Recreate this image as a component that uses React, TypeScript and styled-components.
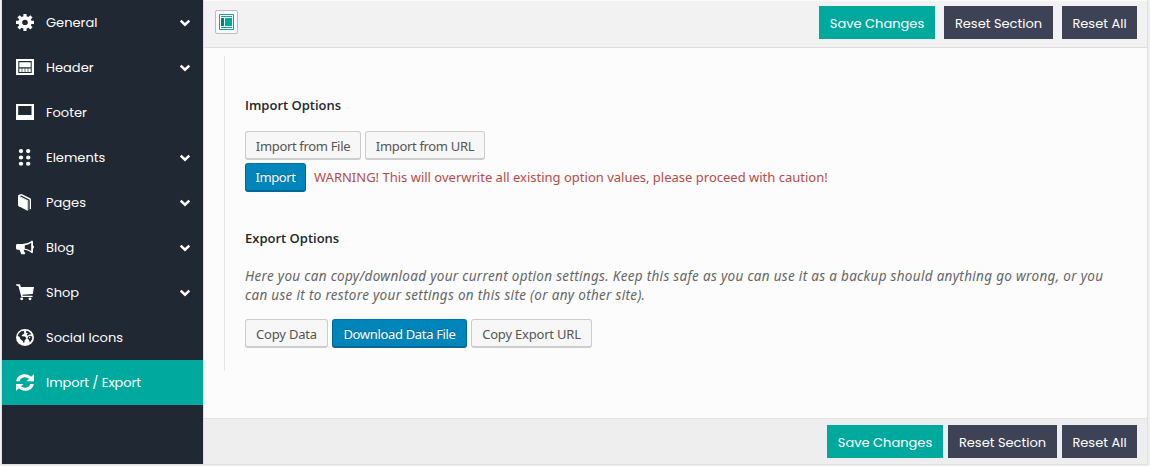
import React from "react";
import styled, { createGlobalStyle, css } from "styled-components";

const Global = createGlobalStyle`
  * { box-sizing: border-box; }
  body { margin: 0; background: #f1f1f1; }
  button { font: inherit; padding: 0; border: 0; cursor: pointer; }
`;

const Page = styled.div`
  width: 1150px;
  height: 466px;
  padding: 0 2px 1px 1px;
  overflow: hidden;
  background: #f1f1f1;
`;

const Panel = styled.div`
  display: flex;
  height: 465px;
  border: solid #dedede;
  border-width: 0 1px 1px;
  background: #fcfcfc;
`;

const Sidebar = styled.nav`
  flex: 0 0 201px;
  background: #1f2833;
`;

const MenuItem = styled.a<{ $active?: boolean }>`
  display: flex;
  align-items: center;
  height: 45px;
  padding: 0 12px 0 14px;
  color: #fff;
  background: ${(p) => (p.$active ? "#00a99d" : "transparent")};
  font-family: Poppins, Inter, sans-serif;
  font-size: 13px;
  line-height: 18px;
`;

const MenuIcon = styled.svg`
  display: block;
  width: 18px;
  height: 17px;
  margin-right: 12px;
  fill: currentColor;
`;

const MenuLabel = styled.span<{ $track: number }>`
  flex: 1;
  white-space: nowrap;
  letter-spacing: ${(p) => p.$track}px;
`;

const Chevron = styled.svg`
  width: 12px;
  height: 8px;
  fill: none;
  stroke: #fff;
  stroke-width: 2.5;
`;

const Main = styled.main`
  display: flex;
  flex: 1;
  flex-direction: column;
  border-left: 1px solid #dedede;
`;

const Toolbar = styled.header`
  display: flex;
  align-items: flex-start;
  height: 48px;
  padding: 5px 10px 0 11px;
  border-top: 1px solid #fcfcfc;
  border-bottom: 1px solid #dedede;
  background: #f2f2f2;
`;

const BottomBar = styled.footer`
  display: flex;
  justify-content: flex-end;
  height: 46px;
  padding: 6px 10px 0 0;
  border-top: 1px solid #e3e3e3;
  background: #eee;
`;

const Actions = styled.div<{ $gap: number }>`
  display: flex;
  gap: ${(p) => p.$gap}px;
  margin-left: auto;
`;

const Action = styled.button<{ $width: number; $primary?: boolean }>`
  width: ${(p) => p.$width}px;
  height: 33px;
  padding-top: 2px;
  color: #fff;
  background: ${(p) => (p.$primary ? "#00a99d" : "#3d4355")};
  font: 400 13px/31px Poppins, Inter, sans-serif;
  white-space: nowrap;
`;

const LayoutButton = styled.button`
  display: grid;
  place-items: center;
  width: 23px;
  height: 24px;
  margin-top: 4px;
  border: 1px solid #bdbdbd;
  border-radius: 2px;
  background: #fafafa;
`;

const Content = styled.section`
  flex: 1;
  padding: 8px 0 0 20px;
`;

const Group = styled.div`
  height: 315px;
  padding: 39px 0 0 20px;
  border-left: 1px solid #e5e5e5;
  color: #555;
  font: 13px/19px "Noto Sans", "Open Sans", sans-serif;
`;

const Heading = styled.h3`
  margin: 0;
  color: #23282d;
  font: 600 13px/20px "Open Sans", "Noto Sans", sans-serif;
`;

const ButtonRow = styled.div<{ $top: number }>`
  display: flex;
  align-items: center;
  gap: 4px;
  margin-top: ${(p) => p.$top}px;
`;

const Button = styled.button<{ $width: number; $track: number; $primary?: boolean; $drop?: number }>`
  width: ${(p) => p.$width}px;
  height: 29px;
  padding-top: ${(p) => p.$drop ?? 2}px;
  border: 1px solid #ccc;
  border-bottom-width: 2px;
  border-radius: 3px;
  color: #555;
  background: #f7f7f7;
  font: 13px/24px "Noto Sans", sans-serif;
  letter-spacing: ${(p) => p.$track}px;
  white-space: nowrap;
  ${(p) =>
    p.$primary &&
    css`
      border-color: #0073aa #006799 #006799;
      color: #fff;
      background: #0085ba;
      text-shadow: 0 -1px 1px #006799;
    `}
`;

const Warning = styled.span`
  margin-left: 4px;
  color: #b94a48;
  white-space: nowrap;
`;

const Description = styled.p`
  margin: 19px 0 0;
  color: #666;
  font-size: 13.5px;
  font-style: italic;
  white-space: nowrap;
`;

const Line = styled.span<{ $track: number }>`
  display: block;
  letter-spacing: ${(p) => p.$track}px;
`;

const icons: Record<string, React.ReactNode> = {
  gear: (
    <path
      fillRule="evenodd"
      d="M7.4 0h3.200v2.500l1.800.7L14.300 1.300l2.300 2.300L14.800 5.500l.7 1.700H18v3.300h-2.500l-.7 1.700 1.800 1.900-2.300 2.300-1.900-1.800-1.800.7V18H7.400v-2.700l-1.800-.7-1.900 1.800-2.300-2.300 1.800-1.900-.7-1.700H0V7.200h2.500l.7-1.700L1.400 3.600l2.300-2.300 1.900 1.900 1.800-.7ZM9 6.100a2.800 2.800 0 1 0 0 5.600 2.800 2.800 0 0 0 0-5.600Z"
    />
  ),
  header: (
    <path
      fillRule="evenodd"
      d="M0 0h18v17H0ZM2.300 2.100v12.700h13.400V2.100ZM3.300 3.500h11.400v5.300h-11.400ZM3.300 10h2.400v3.800h-2.400Zm3 0h2.400v3.800h-2.400Zm3 0h2.400v3.800h-2.400Zm3 0h2.400v3.800h-2.400Z"
    />
  ),
  footer: <path fillRule="evenodd" d="M0 0h18v17H0ZM2.200 2.100v9.600h13.300V2.100Z" />,
  grid: (
    <>
      {[2.200, 9, 15.600].map((y) =>
        [5, 12.200].map((x) => <circle key={`${x}-${y}`} cx={x} cy={y} r="2.200" />),
      )}
    </>
  ),
  book: (
    <>
      <path d="M2 2.200 11.500 7.100v10.700L2.800 13.100Q2 12.600 2 11.700Z" />
      <path d="M2 2.200Q2 1.300 3 .9L4.600.2Q5.300 0 6 .3l8.200 4.300q.8.400.8 1.300v9.600l-1.300 1V6.200L5.200 1.700 4 2.300l8.300 4.500v10.300l-.8.700V7.400Z" />
    </>
  ),
  horn: (
    <path
      fillRule="evenodd"
      d="M16 1.700q1 .2 1 1.500v3.600q1 .4 1 1.700t-1 1.700v3.500q0 1.300-1 1.500c-2.700-2.300-5-3.400-8.300-3.700l.7 2.200 1 1-.9 1.500H5.300L3.500 11.300H1.500Q0 11.300 0 9.900V6.600q0-1.400 1.500-1.400H6.500c4 0 6.700-1.100 9.500-3.500ZM15.200 4.100C13 5.600 11.100 6.400 8.800 6.700v3.500c2.300.2 4.200 1 6.400 2.500Z"
    />
  ),
  cart: (
    <>
      <path d="M0 .2h3.900l1 2.900H18l-1.200 7.500-10.500.7.400 1.100h9.900v1.300H5.400L2.400 2H.7Z" />
      <circle cx="5.700" cy="15.700" r="1.500" />
      <circle cx="14" cy="15.700" r="1.500" />
    </>
  ),
  globe: (
    <>
      <circle cx="9" cy="9" r="9" />
      <path
        fill="#1f2833"
        d="m2.500 5 2.600-2.500 3.400-.7-.9 1.400 1 1-1.500 1.700-1.500.5.7 1.200 2.800.4 1.300 2-1.600 2-.8 3.400-1.300-2.800-2.400-2-.8-2.500-1.800-.8ZM10.300 1.900l2.600.8 2.600 2.800-2 .4-1.900 1.300-1-1 1.700-1.400-2.200-.7ZM12.500 7.700l2.100-.6 1.800 1.300-.5 2.700-2 3.200-1-2.600-1.400-1.800Z"
      />
      <path d="m12.900 9 1-1 .5 1-.8 1Z" />
    </>
  ),
  refresh: (
    <path d="M.2 7.600C.7 3 4.500.2 8.900.2c2.400 0 4.600 1 6.300 2.600L18 0v7.600h-7.500L13 5.100A6 6 0 0 0 8.900 3.500C6.400 3.500 4.200 5 3.700 7.600ZM17.800 10.500C17.300 15 13.500 17.800 9.100 17.800c-2.400 0-4.600-1-6.300-2.600L0 18v-7.500h7.500L5 13A6 6 0 0 0 9.100 14.500c2.500 0 4.700-1.500 5.200-4Z" />
  ),
};

const menu = [
  { label: "General", icon: "gear", open: true, track: 0 },
  { label: "Header", icon: "header", open: true, track: 0 },
  { label: "Footer", icon: "footer", open: false, track: 0 },
  { label: "Elements", icon: "grid", open: true, track: 0 },
  { label: "Pages", icon: "book", open: true, track: 0 },
  { label: "Blog", icon: "horn", open: true, track: 0 },
  { label: "Shop", icon: "cart", open: true, track: 0 },
  { label: "Social Icons", icon: "globe", open: false, track: 0 },
  { label: "Import / Export", icon: "refresh", open: false, track: -0.07 },
];

function SaveActions({ gap }: { gap: number }) {
  return (
    <Actions $gap={gap}>
      <Action $primary $width={116}>Save Changes</Action>
      <Action $width={109}>Reset Section</Action>
      <Action $width={75}>Reset All</Action>
    </Actions>
  );
}

export default function App() {
  return (
    <Page>
      <Global />
      <Panel>
        <Sidebar>
          {menu.map((m) => (
            <MenuItem key={m.label} $active={m.icon === "refresh"}>
              <MenuIcon viewBox="0 0 18 18" preserveAspectRatio="none">{icons[m.icon]}</MenuIcon>
              <MenuLabel $track={m.track}>{m.label}</MenuLabel>
              {m.open && (
                <Chevron viewBox="0 0 12 8">
                  <path d="m1.700 1.700 4.300 4 4.300-4" />
                </Chevron>
              )}
            </MenuItem>
          ))}
        </Sidebar>
        <Main>
          <Toolbar>
            <LayoutButton aria-label="Expand options">
              <svg width="15" height="16" viewBox="0 0 15 16">
                <path d="M.5.500h14v15H.5Z" fill="#fff" stroke="#00a99d" />
                <path d="M2 2h11v1H2Zm0 11h11v1H2Zm4-9h7v8H6Z" fill="#00a99d" />
                <path d="M2 4h3v8H2Z" fill="#008078" />
              </svg>
            </LayoutButton>
            <SaveActions gap={9} />
          </Toolbar>
          <Content>
            <Group>
              <Heading>Import Options</Heading>
              <ButtonRow $top={16}>
                <Button $width={116} $track={-0.33}>Import from File</Button>
                <Button $width={120} $track={-0.33}>Import from URL</Button>
              </ButtonRow>
              <ButtonRow $top={3}>
                <Button $primary $width={61} $track={-0.4} $drop={0}>Import</Button>
                <Warning>WARNING! This will overwrite all existing option values, please proceed with caution!</Warning>
              </ButtonRow>
              <ButtonRow $top={36}>
                <Heading>Export Options</Heading>
              </ButtonRow>
              <Description>
                <Line $track={0.31}>Here you can copy/download your current option settings. Keep this safe as you can use it as a backup should anything go wrong, or you</Line>
                <Line $track={0.31}>can use it to restore your settings on this site (or any other site).</Line>
              </Description>
              <ButtonRow $top={14}>
                <Button $width={83} $track={-0.2}>Copy Data</Button>
                <Button $primary $width={135} $track={-0.33}>Download Data File</Button>
                <Button $width={121} $track={-0.2}>Copy Export URL</Button>
              </ButtonRow>
            </Group>
          </Content>
          <BottomBar>
            <SaveActions gap={5} />
          </BottomBar>
        </Main>
      </Panel>
    </Page>
  );
}
